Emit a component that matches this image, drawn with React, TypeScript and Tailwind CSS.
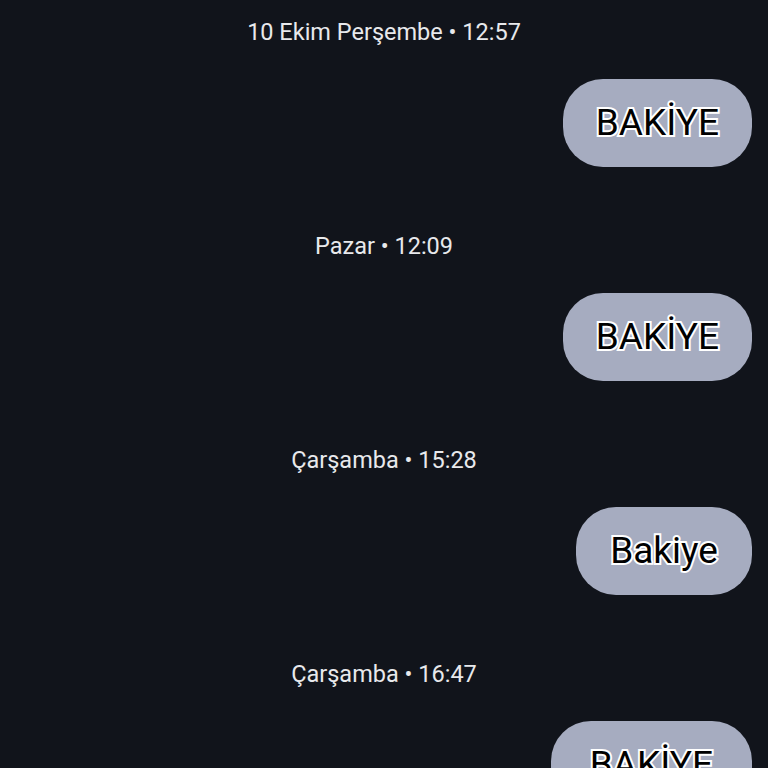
const messages = [
  { time: '10 Ekim Perşembe • 12:57', text: 'BAKİYE', pad: 'px-[33px]' },
  { time: 'Pazar • 12:09', text: 'BAKİYE', pad: 'px-[33px]' },
  { time: 'Çarşamba • 15:28', text: 'Bakiye', pad: 'px-[34px]' },
  { time: 'Çarşamba • 16:47', text: 'BAKİYE', pad: 'px-[39px]' },
];

export default function App() {
  return (
    <div className="h-[768px] w-[768px] overflow-hidden bg-[#11141b]">
      <div className="flex flex-col pt-[18px] pr-4">
        {messages.map((m, i) => (
          <div key={i} className="flex flex-col mb-[65px]">
            <p className="text-center text-[23.5px] leading-[28px] text-[#e8e9ec] font-['Roboto',sans-serif] pl-4">
              {m.time}
            </p>
            <div className="flex justify-end mt-[33px]">
              <div className={`h-[88px] rounded-[40px] bg-[#a6acc0] flex items-center ${m.pad}`}>
                <span className="text-[37px] text-black font-['Roboto',sans-serif] [-webkit-text-stroke:4px_white] [paint-order:stroke_fill]">
                  {m.text}
                </span>
              </div>
            </div>
          </div>
        ))}
      </div>
    </div>
  );
}
